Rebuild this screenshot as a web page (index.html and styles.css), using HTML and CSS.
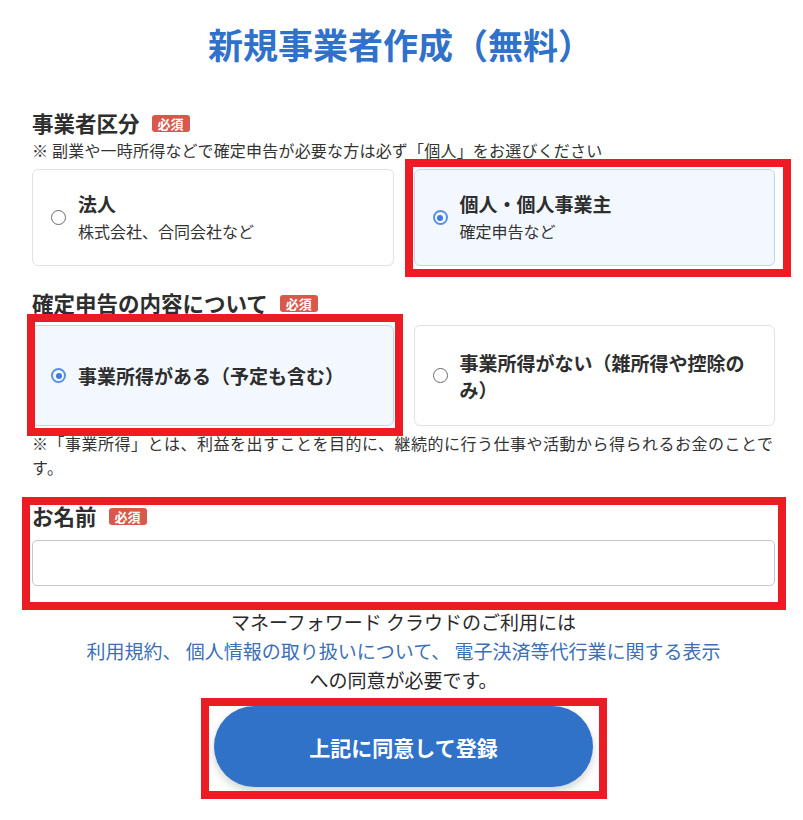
FILE: index.html
```html
<!DOCTYPE html>
<html lang="ja">
  <head>
    <meta charset="UTF-8" />
    <meta name="viewport" content="width=device-width, initial-scale=1.0" />
    <title>新規事業者作成（無料）</title>
    <link rel="stylesheet" href="styles.css">
  </head>
  <body>
    <div class="container">
      <h1 class="title">新規事業者作成（無料）</h1>

      <div class="section">
        <div class="field-head">
          <div class="label">事業者区分<span class="badge">必須</span></div>
          <p class="note">※ 副業や一時所得などで確定申告が必要な方は必ず「個人」をお選びください</p>
        </div>
        <div class="choices">
          <label class="choice">
            <span class="radio"></span>
            <span class="choice-text">
              <span class="choice-title">法人</span>
              <span class="choice-sub">株式会社、合同会社など</span>
            </span>
          </label>
          <label class="choice selected">
            <span class="radio"></span>
            <span class="choice-text">
              <span class="choice-title">個人・個人事業主</span>
              <span class="choice-sub">確定申告など</span>
            </span>
          </label>
        </div>
      </div>

      <div class="section">
        <div class="field-head">
          <div class="label">確定申告の内容について<span class="badge">必須</span></div>
        </div>
        <div class="choices tall">
          <label class="choice selected">
            <span class="radio"></span>
            <span class="choice-text">
              <span class="choice-title">事業所得がある（予定も含む）</span>
            </span>
          </label>
          <label class="choice">
            <span class="radio"></span>
            <span class="choice-text">
              <span class="choice-title">事業所得がない（雑所得や控除のみ）</span>
            </span>
          </label>
        </div>
        <p class="note wide">※「事業所得」とは、利益を出すことを目的に、継続的に行う仕事や活動から得られるお金のことです。</p>
      </div>

      <div class="section">
        <div class="field-head name-head">
          <div class="label">お名前<span class="badge">必須</span></div>
        </div>
        <input class="text-input" type="text" />
      </div>

      <div class="consent">
        <p>マネーフォワード クラウドのご利用には</p>
        <p class="links"><a href="#">利用規約</a>、 <a href="#">個人情報の取り扱いについて</a>、 <a href="#">電子決済等代行業に関する表示</a></p>
        <p>への同意が必要です。</p>
      </div>

      <div class="actions">
        <button class="submit" type="button">上記に同意して登録</button>
      </div>
    </div>

    <!-- annotation boxes drawn over the form -->
    <div class="mark mark-kind"></div>
    <div class="mark mark-income"></div>
    <div class="mark mark-name"></div>
    <div class="mark mark-submit"></div>
  </body>
</html>
```

FILE: styles.css
```css
body {
  font-family: "Noto Sans CJK JP", "Noto Sans", sans-serif;
  color: #333;
  background-color: #fff;
  margin: 0;
  position: relative;
  height: 820px;
  overflow: hidden;
}
.container {
  width: 743px;
  margin-left: 32px;
  padding-top: 18px;
}
.title {
  margin: 0 0 38px;
  padding-right: 6px;
  text-align: center;
  font-size: 35px;
  line-height: 52px;
  font-weight: bold;
  color: #3071c9;
}
.section {
  margin-bottom: 22px;
}
.field-head {
  margin-bottom: 7px;
}
.label {
  display: flex;
  align-items: center;
  font-size: 21.5px;
  line-height: 30px;
  font-weight: bold;
  color: #2e2e2e;
}
.badge {
  margin-left: 12px;
  padding: 0 6px;
  height: 17px;
  line-height: 17px;
  font-size: 13px;
  font-weight: bold;
  color: #fff;
  background-color: #d6594b;
  border-radius: 3px;
}
.note {
  margin: 0;
  font-size: 16px;
  line-height: 24px;
  letter-spacing: 0.2px;
  color: #333;
}
.note.wide {
  margin-top: 5px;
  letter-spacing: 0.5px;
}
.choices {
  display: grid;
  grid-template-columns: 1fr 1fr;
  gap: 20px;
}
.choice {
  display: flex;
  align-items: center;
  min-height: 95px;
  padding: 0 16px 0 18px;
  border: 1px solid #e2e2e2;
  border-radius: 6px;
  background-color: #fff;
  cursor: pointer;
}
.choices.tall .choice {
  min-height: 99px;
}
.choice.selected {
  background-color: #f3f8ff;
  border-color: #bcd6f4;
}
.radio {
  flex: none;
  width: 15px;
  height: 15px;
  box-sizing: border-box;
  border: 1.5px solid #6a6a6a;
  border-radius: 50%;
  position: relative;
  margin-right: 12px;
}
.choice.selected .radio {
  border: 2px solid #5a8fe8;
}
.choice.selected .radio::after {
  content: "";
  position: absolute;
  left: 2.5px;
  top: 2.5px;
  width: 6px;
  height: 6px;
  border-radius: 50%;
  background-color: #3c7be4;
}
.choice-text {
  display: flex;
  flex-direction: column;
}
.choice-title {
  font-size: 19px;
  line-height: 27px;
  font-weight: bold;
  color: #2e2e2e;
}
.choice-sub {
  font-size: 16px;
  line-height: 28px;
  color: #333;
}
.name-head {
  margin-bottom: 9px;
}
.text-input {
  display: block;
  width: 100%;
  height: 46px;
  box-sizing: border-box;
  border: 1px solid #c6c6c6;
  border-radius: 5px;
  font-size: 16px;
  padding: 0 12px;
}
.consent {
  margin-top: -1px;
  text-align: center;
  font-size: 19px;
  line-height: 29px;
  color: #2a2a2a;
}
.consent p {
  margin: 0;
}
.links a {
  color: #3b6fb6;
  text-decoration: none;
}
.links {
  color: #3b6fb6;
}
.actions {
  display: flex;
  justify-content: center;
  margin-top: 12px;
}
.submit {
  width: 379px;
  height: 81px;
  border: none;
  border-radius: 41px;
  background-color: #3172c9;
  color: #fff;
  font-family: inherit;
  font-size: 21px;
  font-weight: bold;
  box-shadow: 0 4px 8px rgba(0, 0, 0, 0.18);
  cursor: pointer;
}
.mark {
  position: absolute;
  box-sizing: border-box;
  border: 8px solid #ed1c24;
  pointer-events: none;
}
.mark-kind {
  left: 405px;
  top: 159px;
  width: 386px;
  height: 118px;
}
.mark-income {
  left: 27px;
  top: 314px;
  width: 376px;
  height: 122px;
}
.mark-name {
  left: 22px;
  top: 497px;
  width: 764px;
  height: 113px;
}
.mark-submit {
  left: 201px;
  top: 698px;
  width: 406px;
  height: 101px;
}
```
